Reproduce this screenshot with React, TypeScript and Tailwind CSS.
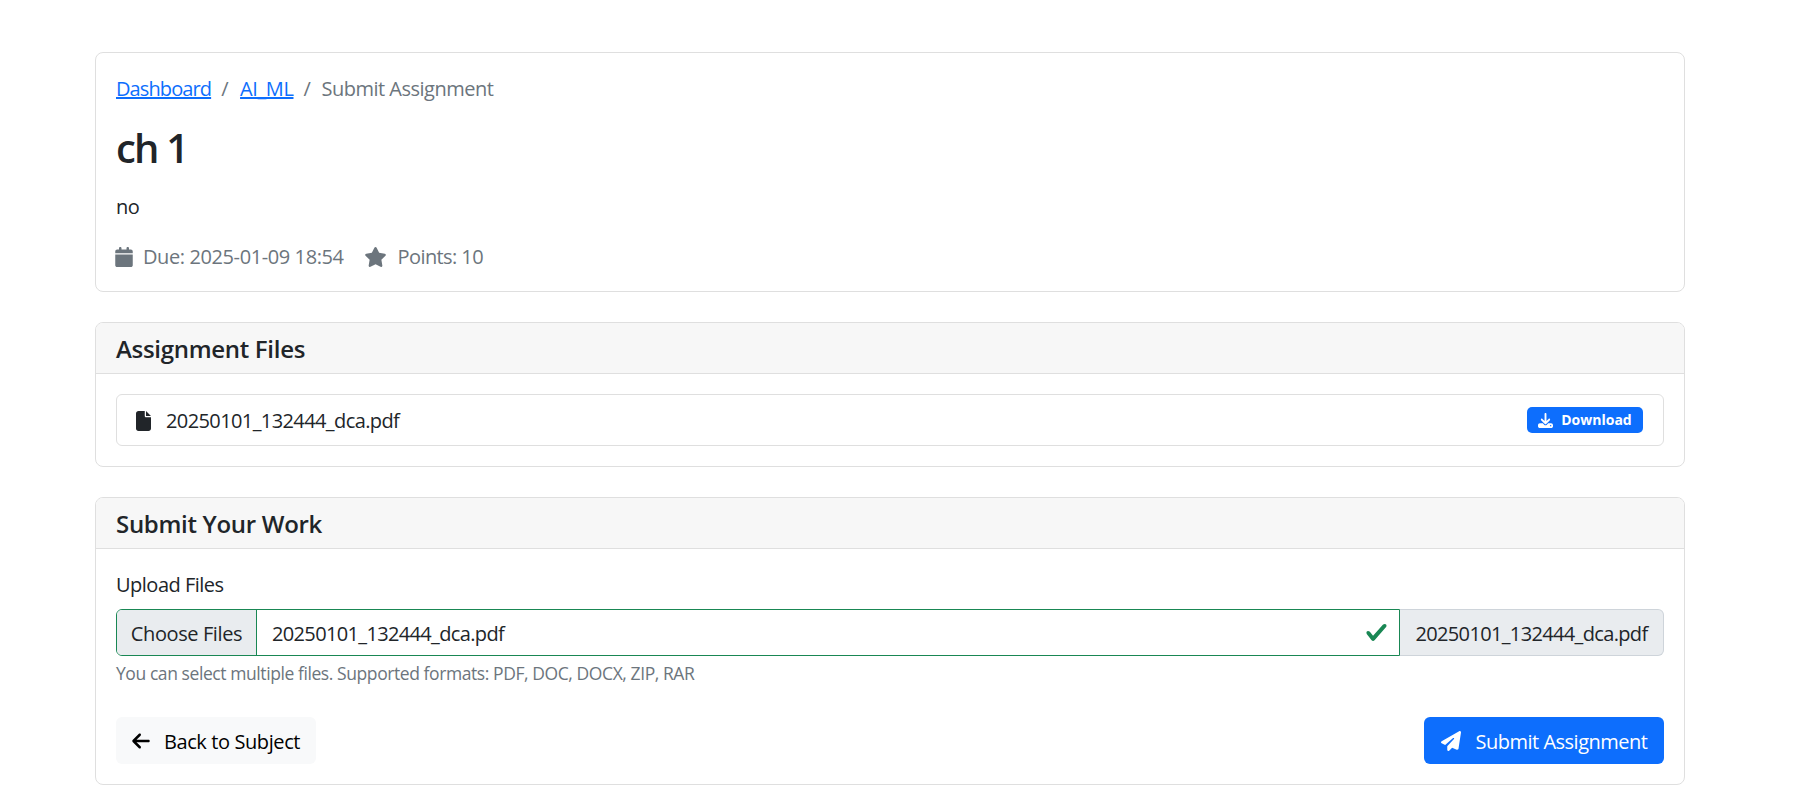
import { FaArrowLeft, FaCalendar, FaDownload, FaFile, FaPaperPlane, FaStar } from "react-icons/fa6";

const fileName = "20250101_132444_dca.pdf";

function CardHeader({ title }: { title: string }) {
  return (
    <div className="h-[51px] border-b border-[#dfdfdf] bg-[#f7f7f7] rounded-t-[7px] pl-[20px] pt-[11px]">
      <h5 className="text-[24px] font-semibold leading-[30px] text-[#212529] tracking-[-0.3px]">{title}</h5>
    </div>
  );
}

export default function App() {
  return (
    <div className="min-h-[791px] bg-white text-[20px] leading-[30px] text-[#212529] font-['Open_Sans','Noto_Sans',sans-serif] tracking-[-0.4px]">
      <div className="ml-[95px] w-[1590px] pt-[52px] flex flex-col gap-[30px]">
        {/* Assignment info */}
        <div className="h-[240px] border border-[#dfdfdf] rounded-[8px] px-[20px] pt-[21px]">
          <nav className="h-[30px] flex items-center text-[#6c757d]">
            <a className="text-[#0d6efd] underline tracking-[-0.9px]">Dashboard</a>
            <span className="pl-[10px] pr-[12px]">/</span>
            <a className="text-[#0d6efd] underline">AI_ML</a>
            <span className="pl-[10px] pr-[11px]">/</span>
            <span className="tracking-[-0.5px]">Submit Assignment</span>
          </nav>
          <h2 className="mt-[20px] text-[40px] leading-[48px] font-semibold tracking-[-1.8px]">ch 1</h2>
          <p className="mt-[20px]">no</p>
          <div className="mt-[20px] flex items-center text-[#6c757d]">
            <FaCalendar className="w-[18px] h-[20px] -ml-[1px]" />
            <span className="ml-[10px]">Due: 2025-01-09 18:54</span>
            <FaStar className="ml-[20px] w-[23px] h-[20px]" />
            <span className="ml-[11px] tracking-[-0.6px]">Points: 10</span>
          </div>
        </div>

        {/* Assignment files */}
        <div className="h-[145px] border border-[#dfdfdf] rounded-[8px]">
          <CardHeader title="Assignment Files" />
          <div className="px-[20px] pt-[20px]">
            <div className="h-[52px] border border-[#dfdfdf] rounded-[6px] pl-[19px] pr-[20px] flex items-center justify-between">
              <div className="flex items-center pt-[1px]">
                <FaFile className="w-[15px] h-[20px]" />
                <span className="ml-[15px] tracking-[-0.6px]">{fileName}</span>
              </div>
              <a className="w-[116px] h-[26px] rounded-[5px] bg-[#0d6efd] text-white text-[14px] font-bold flex items-center justify-center gap-[8px] tracking-normal">
                <FaDownload className="w-[15px] h-[15px]" />
                Download
              </a>
            </div>
          </div>
        </div>

        {/* Submit form */}
        <div className="h-[288px] border border-[#dfdfdf] rounded-[8px]">
          <CardHeader title="Submit Your Work" />
          <div className="px-[20px] pt-[21px]">
            <label className="block h-[30px] tracking-[-0.5px]">Upload Files</label>
            <div className="mt-[9px] h-[47px] flex">
              <div className="flex-1 flex border border-[#198754] rounded-l-[6px] overflow-hidden">
                <div className="w-[140px] bg-[#e9ecef] border-r border-[#198754] pt-[2px] flex items-center justify-center">
                  Choose Files
                </div>
                <div className="flex-1 pl-[15px] pr-[11px] flex items-center justify-between">
                  <span className="tracking-[-0.65px] pt-[2px]">{fileName}</span>
                  <svg viewBox="0 0 8 8" className="w-[23px] h-[23px]">
                    <path
                      fill="#198754"
                      d="M2.3 6.73.6 4.53c-.4-1.04.46-1.4 1.1-.8l1.1 1.4 3.4-3.8c.6-.63 1.6-.27 1.2.7l-4 4.6c-.43.5-.8.4-1.1.1z"
                    />
                  </svg>
                </div>
              </div>
              <div className="w-[264px] bg-[#e9ecef] border border-l-0 border-[#ced4da] rounded-r-[6px] pt-[2px] flex items-center justify-center tracking-[-0.65px]">
                {fileName}
              </div>
            </div>
            <div className="mt-[4px] text-[17.5px] leading-[26px] text-[#6c757d] tracking-[-0.42px]">
              You can select multiple files. Supported formats: PDF, DOC, DOCX, ZIP, RAR
            </div>
            <div className="mt-[31px] flex justify-between">
              <a className="w-[200px] h-[47px] bg-[#f8f9fa] rounded-[6px] flex items-center justify-center gap-[14px] text-black">
                <FaArrowLeft className="w-[18px] h-[20px]" />
                <span className="pt-[2px]">Back to Subject</span>
              </a>
              <button className="w-[240px] h-[47px] bg-[#0d6efd] rounded-[6px] flex items-center justify-center gap-[15px] text-white tracking-[-0.5px]">
                <FaPaperPlane className="w-[20px] h-[20px]" />
                <span className="pt-[2px]">Submit Assignment</span>
              </button>
            </div>
          </div>
        </div>
      </div>
    </div>
  );
}
